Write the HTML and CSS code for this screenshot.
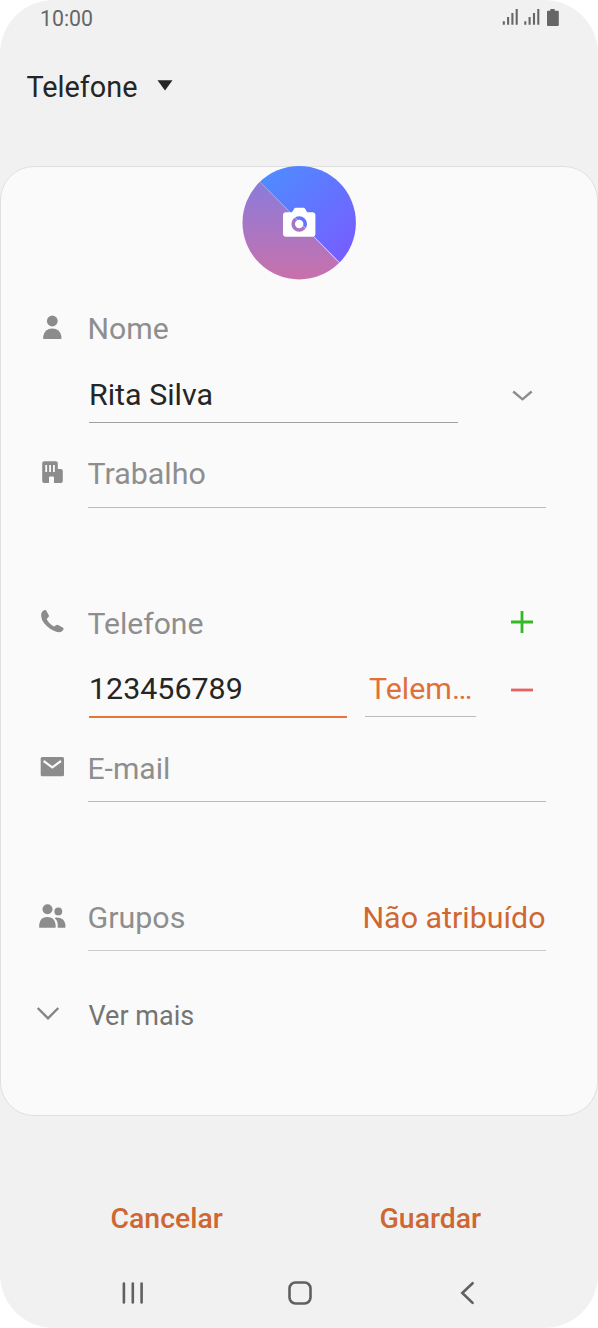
FILE: index.html
```html
<!DOCTYPE html>
<html lang="pt">
<head>
<meta charset="utf-8">
<title>Telefone</title>
<link rel="stylesheet" href="styles.css">
</head>
<body>
<div class="phone">
  <div class="status">
    <span class="time">10:00</span>
    <svg class="status-icons" width="60" height="20" viewBox="0 0 60 20" stroke="#666" stroke-width="2.1">
      <path d="M2.800 16.700v-3.500M7.100 16.700V9M11.400 16.700V5M15.700 16.700V1M24.300 16.700v-3.500M28.600 16.700V9M33 16.700V5M37.300 16.700V1"/>
      <path d="M49.300 1h4.400v1.800h3.100q1 0 1 1v13.200q0 1-1 1H47q-1 0-1-1V3.800q0-1 1-1h2.300z" fill="#666" stroke="none"/>
    </svg>
  </div>
  <header class="header">
    <h1 class="title">Telefone</h1>
    <svg class="caret" width="16" height="12" viewBox="0 0 16 12"><path d="M.5.300h15L8 10.600z" fill="#252525"/></svg>
  </header>

  <main class="card">
    <svg class="avatar" width="114" height="114" viewBox="0 0 114 114">
      <defs>
        <linearGradient id="blue" x1="0" y1="0" x2="114" y2="114" gradientUnits="userSpaceOnUse"><stop offset=".15" stop-color="#4f8bff"/><stop offset=".85" stop-color="#765eff"/></linearGradient>
        <linearGradient id="pink" x1="0" y1="15" x2="0" y2="113" gradientUnits="userSpaceOnUse"><stop offset="0" stop-color="#8a7bdc"/><stop offset="1" stop-color="#c871ab"/></linearGradient>
        <clipPath id="disc"><circle cx="57.200" cy="56.700" r="56.700"/></clipPath>
      </defs>
      <g clip-path="url(#disc)">
        <path d="M0-2.400V-5H114v118z" fill="url(#blue)"/>
        <path d="M0-2.400V114h114z" fill="url(#pink)"/>
      </g>
      <path fill="#fff" fill-rule="evenodd" d="M44 46.300h6l2-3.400q.6-1.100 1.800-1.100h7.600q1.200 0 1.800 1.100l2 3.400h5.200q3 0 3 3v18.400q0 3-3 3H44q-3 0-3-3V49.300q0-3 3-3zM57.200 50.200a7.800 7.800 0 1 0 0 15.600a7.800 7.800 0 1 0 0-15.600zM57.200 53.800a4.200 4.200 0 1 1 0 8.400a4.200 4.200 0 1 1 0-8.400z"/>
    </svg>

    <section class="row name-label">
      <svg class="icon" viewBox="0 0 40 40"><circle cx="20.300" cy="11" r="5.400"/><path d="M11.200 29v-2.500q1.400-7.900 9.100-7.900t9.100 7.900V29z"/></svg>
      <span class="label">Nome</span>
    </section>
    <section class="row name-value">
      <div class="field name-field">Rita Silva</div>
      <svg class="expand" width="22" height="14" viewBox="0 0 22 14"><path d="M1.200 2.500l9.300 7.800L19.700 2.500"/></svg>
    </section>
    <section class="row work">
      <svg class="icon" viewBox="0 0 40 40"><path fill-rule="evenodd" d="M12.200 7.200h11.600q2 0 2 2V15h3q2 0 2 2v10q0 2-2 2H22v-5.500q0-1-1-1h-3q-1 0-1 1V29h-4.800q-2 0-2-2V9.200q0-2 2-2zM13.300 11v7h1.800v-7zM17.200 11v7H19v-7zM21 11v7h1.800v-7z"/></svg>
      <div class="field label">Trabalho</div>
    </section>

    <section class="row phone-label">
      <svg class="icon" viewBox="0 0 40 40"><path d="M9.400 10Q10.500 7.800 12.600 7.100q1.200-.4 1.700.7l2.500 4.400q.5 1-.3 1.900l-1.800 2q2.200 5 7.300 7.500l2.400-1.600q.9-.5 1.800.1l4.800 2.600q1 .6.500 1.700-1 1.700-2.700 2.600Q22.500 30 15 23.300 7.800 16.500 9.400 10z"/></svg>
      <span class="label">Telefone</span>
      <svg class="action" viewBox="0 0 24 24"><path d="M12 1v22M1 12h22" stroke="#35b825"/></svg>
    </section>
    <section class="row number">
      <div class="field number-field">123456789</div>
      <div class="field type-field">Telem…</div>
      <svg class="action" viewBox="0 0 24 24"><path d="M1 12h22" stroke="#e26363"/></svg>
    </section>
    <section class="row email">
      <svg class="icon" viewBox="0 0 40 40"><rect x="8.700" y="8" width="23.300" height="19.300" rx="1.500"/><path d="M11.600 12l8.700 6.500L29 12" fill="none" stroke="#fafafa" stroke-width="2.200"/></svg>
      <div class="field label">E-mail</div>
    </section>

    <section class="row groups">
      <svg class="icon" viewBox="0 0 40 40"><circle cx="15.500" cy="11.300" r="5"/><circle cx="26.300" cy="13.400" r="3.900"/><path d="M7.200 29.800v-3.300q1-7.400 8.200-7.400t8.200 7.400v3.300zM23.800 19.400q8.400-.4 9.600 6.800v3.600h-7.700V26q-.2-3.600-2.900-5.800z"/></svg>
      <div class="field groups-field"><span class="label">Grupos</span><span class="link">Não atribuído</span></div>
    </section>
    <section class="row more">
      <svg class="icon" viewBox="0 0 40 40"><path d="M5.700 13l10.300 10.300L26.300 13" fill="none" stroke="#858585" stroke-width="2.400"/></svg>
      <span class="more-label">Ver mais</span>
    </section>
  </main>

  <div class="buttons">
    <span class="button cancel">Cancelar</span>
    <span class="button save">Guardar</span>
  </div>
  <nav class="nav">
    <svg width="24" height="24" viewBox="0 0 24 24"><path d="M2.900 2.500v19M11.800 2.500v19M20.600 2.500v19"/></svg>
    <svg width="24" height="24" viewBox="0 0 24 24"><rect x="1.500" y="1.500" width="21" height="21" rx="6"/></svg>
    <svg width="24" height="24" viewBox="0 0 24 24"><path d="M17.600 2.200L7.300 12l10.300 9.900"/></svg>
  </nav>
</div>
</body>
</html>
```
FILE: styles.css
```css
* { box-sizing: border-box; }

body {
  margin: 0;
  background: #fff;
  font-family: Roboto, sans-serif;
  color: #252525;
}

svg { display: block; flex: none; }

.phone {
  width: 598px;
  height: 1328px;
  display: flex;
  flex-direction: column;
  background: #f1f1f1;
  border-radius: 54px;
  overflow: hidden;
}

.status {
  height: 36px;
  padding: 8px 37px 0 40px;
  display: flex;
  justify-content: space-between;
}

.time {
  padding-top: 1px;
  font-size: 21.3px;
  line-height: 20px;
  color: #666;
}

.header {
  height: 130px;
  padding: 31px 0 0 26.5px;
  display: flex;
  gap: 20px;
}

.title {
  margin: 0;
  font-size: 28.8px;
  font-weight: 400;
  line-height: 40px;
}

.caret { margin-top: 13px; }

.card {
  height: 950px;
  display: flex;
  flex-direction: column;
  background: #fafafa;
  border: 1px solid #e0e0e0;
  border-radius: 34px;
}

.avatar { margin: -1px auto 30px; }

.row {
  display: flex;
  align-items: flex-start;
  padding: 0 51.5px 0 31px;
  font-size: 30.4px;
  line-height: 40px;
}

.icon {
  width: 40px;
  height: 40px;
  margin-right: 15.5px;
  fill: #8c8c8c;
}

.label { color: #8e8e8e; }

.field {
  flex: 1;
  border-bottom: 1px solid #bcbcbc;
}

.name-label {
  height: 65px;
  font-size: 30.2px;
  line-height: 38px;
}

.name-value { height: 79px; padding: 0 63px 0 88px; }

.name-field {
  flex: none;
  width: 369px;
  height: 48px;
  border-color: #a0a0a0;
}

.expand {
  margin: 14px 0 0 auto;
  fill: none;
  stroke: #8c8c8c;
  stroke-width: 2.4;
}

.work { height: 149px; }
.work .field { height: 54px; }

.phone-label {
  height: 66px;
  padding-right: 63px;
  font-size: 30.1px;
  line-height: 41px;
}

.action {
  width: 24px;
  height: 24px;
  margin: 7px 0 0 auto;
  fill: none;
  stroke-width: 2.8;
}

.number { height: 80px; padding: 0 63px 0 88px; }

.number-field {
  flex: none;
  width: 258px;
  height: 49px;
  border-bottom: 2px solid #e8743b;
}

.type-field {
  flex: none;
  width: 111px;
  height: 48px;
  margin-left: 18px;
  padding-left: 4px;
  color: #df7138;
}

.number .action { margin-top: 9px; }

.email { height: 149px; font-size: 30.1px; }
.email .field { height: 53px; }

.groups { height: 97px; }

.groups-field {
  height: 53px;
  display: flex;
  justify-content: space-between;
  border-color: #cacaca;
}

.link { color: #cf6733; }

.more-label {
  padding-left: 1px;
  font-size: 27px;
  line-height: 42px;
  color: #747474;
}

.buttons {
  height: 148px;
  padding-top: 83px;
  display: flex;
  font-size: 28.4px;
  font-weight: 500;
  line-height: 40px;
  color: #cf6733;
}

.cancel { padding-left: 110.5px; width: 379.5px; }

.nav {
  padding: 17px 119px 0 121px;
  display: flex;
  justify-content: space-between;
  fill: none;
  stroke: #606060;
  stroke-width: 2.6;
  stroke-linecap: round;
}
```
